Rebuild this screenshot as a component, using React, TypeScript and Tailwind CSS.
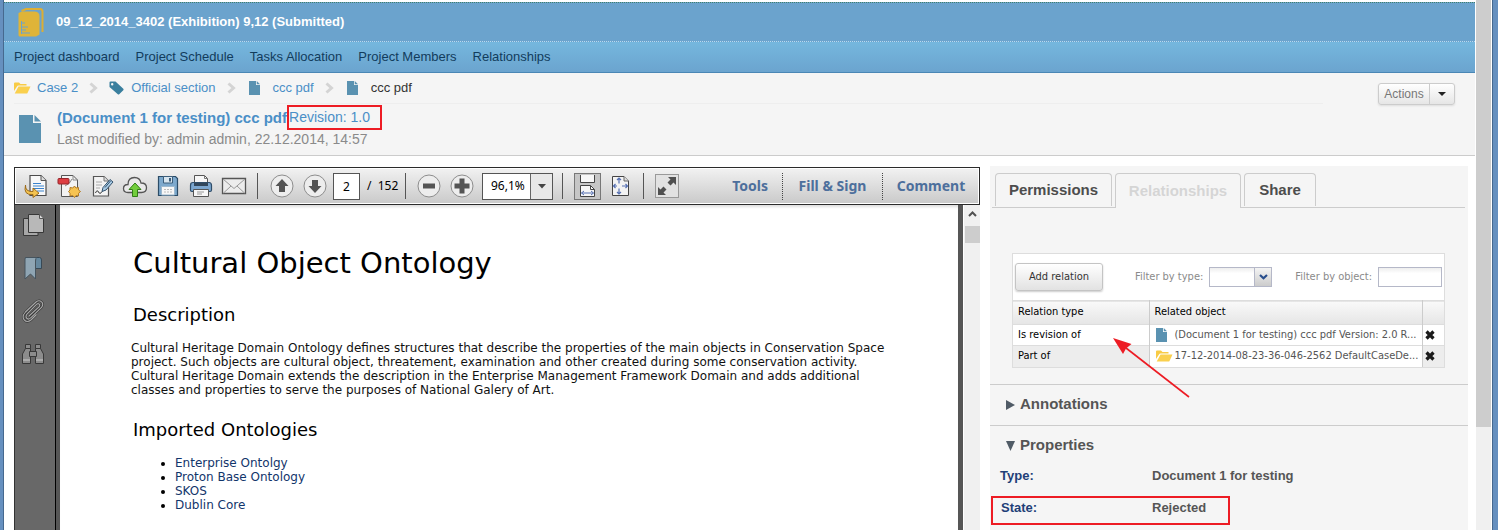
import type { ReactNode } from "react";

function ProjectIcon() {
  return (
    <svg width="26" height="29" viewBox="0 0 26 29" className="shrink-0">
      <path d="M3.500 3 8 1H22Q24.500 1 24.500 3.500V24" fill="none" stroke="#dcae35" strokeWidth="2" />
      <path d="M0.500 5 4 3.500H17Q21.500 4 21.500 8V26.500L18 28.500H2Q0.500 28.500 0.500 27Z" fill="#dfb438" />
      <path d="M3.500 13V26M3.500 15H7M3.500 19H10M3.500 22H8M3.500 25H12" stroke="#6ba3cd" strokeWidth="1" fill="none" />
    </svg>
  );
}

function DocIcon({ large = false }: { large?: boolean }) {
  return (
    <svg width={large ? 22 : 11} height={large ? 28 : 14} viewBox="0 0 22 28" className="shrink-0">
      <path d="M0 0H14V8H22V28H0Z" fill="#5a92b1" />
      <path d="M15.500 0 22 6.500H15.500Z" fill="#5a92b1" />
    </svg>
  );
}

function FolderIcon() {
  return (
    <svg width="17" height="12" viewBox="0 0 17 12" className="shrink-0">
      <path d="M0 9V1.500Q0 .5 1 .5H5L6.500 2H12.500V3.500H4.500Q3.500 3.500 3 4.500Z" fill="#f8cb45" />
      <path d="M4.500 4.500H16.500L13.500 11Q13.200 11.500 12.500 11.500H.7Z" fill="#fad04e" />
    </svg>
  );
}

function TagIcon() {
  return (
    <svg width="15" height="14" viewBox="0 0 15 14" className="shrink-0">
      <path fillRule="evenodd" d="M.5 1.500Q.5.500 1.500.500H6.500L14.300 7.800Q15 8.500 14.300 9.200L10.200 13.200Q9.500 13.800 8.800 13.200L.5 6ZM3.200 2A1.200 1.200 0 1 0 3.200 4.400 1.200 1.200 0 1 0 3.200 2Z" fill="#3a7f9e" />
    </svg>
  );
}

function Chevron() {
  return (
    <svg width="9" height="12" viewBox="0 0 9 12" className="shrink-0">
      <path d="M1.500 1.500 6.500 6 1.500 10.500" fill="none" stroke="#d4d4d4" strokeWidth="3" />
    </svg>
  );
}

function CrossIcon() {
  return (
    <svg width="10" height="10" viewBox="0 0 10 10">
      <path d="M1.500 1.500 8.500 8.500M8.500 1.500 1.500 8.500" stroke="#1b1b1b" strokeWidth="3.200" />
    </svg>
  );
}

const Page = ({ x = 6, y = 1 }: { x?: number; y?: number }) => (
  <>
    <path d={`M${x} ${y}h11l5 5v15h-16z`} fill="#f8f8f8" stroke="#4c4c4c" strokeWidth="1.200" />
    <path d={`M${x + 11} ${y}v5h5`} fill="#ddd" stroke="#555" />
  </>
);

function ConvertIcon() {
  return (
    <svg width="24" height="24" viewBox="0 0 24 24">
      <Page x={6} y={1.500} />
      <path d="M9 9.500H17M9 12H20M9 14.500H20M13 17H20" stroke="#3b83cd" strokeWidth="1.200" />
      <path d="M1.500 11Q1 18 9 17.500V14L15 19.200 9 23.500V20.500Q-1 21.500 1.500 11Z" fill="#f4c451" stroke="#9b6a1a" />
    </svg>
  );
}

function CreatePdfIcon() {
  return (
    <svg width="24" height="24" viewBox="0 0 24 24">
      <path d="M4.500 1.500H16L20.500 6V22.500H4.500Z" fill="#f3f3f3" stroke="#555" />
      <path d="M16 1.500V6H20.500M8 12Q13 10 15 5" fill="none" stroke="#888" />
      <rect x="1" y="4.500" width="11" height="5.500" rx="1" fill="#dd3e43" stroke="#96252a" />
      <path d="M17.500 12 19 14 21.500 13.500 21.500 16 23.500 17.500 21.500 19.300 21.500 22 19 21.500 17.500 23.500 15.800 21.500 13 22 13 19.300 11.500 17.500 13 16 13 13.500 15.800 14Z" fill="#f6c351" stroke="#b17b25" />
    </svg>
  );
}

function EditIcon() {
  return (
    <svg width="24" height="24" viewBox="0 0 24 24">
      <path d="M3.500 2.500H14L18.500 7V22H3.500Z" fill="#f3f3f3" stroke="#555" strokeWidth="1.200" />
      <path d="M14 2.500V7H18.500" fill="#ddd" stroke="#777" />
      <path d="M6 8H12M6 11H12M6 14H10" stroke="#aaa" />
      <path d="M5.500 19Q7 15 8.500 18T12 17.500" stroke="#333" fill="none" />
      <path d="M12 17.500 13 13.500 20 5.500 23 8 16 16Z" fill="#a8cbe6" stroke="#33516b" />
      <path d="M15 13.500 20.500 7" stroke="#33516b" />
    </svg>
  );
}

function CloudIcon() {
  return (
    <svg width="26" height="24" viewBox="0 0 26 24">
      <path d="M6 18.500Q1.500 18.500 1.500 14.500 1.500 10.500 6 10.500 6 3.500 12.500 3.500 18 3.500 19 9 24.500 9 24.500 13.800 24.500 18.500 19.500 18.500Z" fill="#e9e9e9" stroke="#555" strokeWidth="1.300" />
      <path d="M13 9 19 15.500H15.500V22.500H10.500V15.500H7Z" fill="#72cd3c" stroke="#317d16" />
    </svg>
  );
}

function SaveIcon() {
  return (
    <svg width="24" height="24" viewBox="0 0 24 24">
      <path d="M2.500 2.500H19.500L21.500 4.500V21.500H2.500Z" fill="#7da9cd" stroke="#2c4c67" strokeWidth="1.200" />
      <path d="M7.500 2.500H16.500V9H7.500Z" fill="#d7e5ef" stroke="#3c5e7b" />
      <path d="M13 4H15V7.500H13Z" fill="#3c5e7b" />
      <path d="M5.500 12.500H18.500V21H5.500Z" fill="#f7f7f7" stroke="#9db9cf" />
      <path d="M8 15.500H16M8 18H16" stroke="#bbb" strokeDasharray="2 1" />
    </svg>
  );
}

function PrintIcon() {
  return (
    <svg width="24" height="24" viewBox="0 0 24 24">
      <path d="M5.500 11V1.500H15.500L18.500 4.500V11Z" fill="#f7f7f7" stroke="#555" />
      <path d="M15.500 1.500V4.500H18.500" fill="none" stroke="#777" />
      <path d="M1.500 11.500Q1.500 8.500 4 8.500H20Q22.500 8.500 22.500 11.500V16Q22.500 17.500 21 17.500H3Q1.500 17.500 1.500 16Z" fill="#7ba6cf" stroke="#2f4d69" strokeWidth="1.200" />
      <path d="M5 9H19V12H5Z" fill="#31465a" />
      <path d="M4.500 15.500H19.500V22.500H4.500Z" fill="#f7f7f7" stroke="#555" />
      <path d="M8 18H15M8 20H13" stroke="#999" />
    </svg>
  );
}

function MailIcon() {
  return (
    <svg width="26" height="24" viewBox="0 0 26 24">
      <path d="M1.500 4.500H24.500V19.500H1.500Z" fill="#ececec" stroke="#555" strokeWidth="1.300" />
      <path d="M2 5 13 14.500 24 5M2.500 19 10 12M23.500 19 16 12" fill="none" stroke="#999" />
    </svg>
  );
}

function RoundIcon({ d }: { d: string }) {
  return (
    <svg width="24" height="24" viewBox="0 0 24 24">
      <circle cx="12" cy="12" r="11" fill="#ededed" stroke="#8d8d8d" />
      <path d={d} fill="#545454" />
    </svg>
  );
}

function FitWidthIcon() {
  return (
    <svg width="19" height="22" viewBox="0 0 19 22">
      <path d="M2.500 0V7.500H16.500V0" fill="#f7f7f7" stroke="#444" />
      <path d="M2.500 21.500V10.500H12.500L16.500 14.500V21.500Z" fill="#f7f7f7" stroke="#444" />
      <path d="M12.500 10.500V14.500H16.500" fill="none" stroke="#444" />
      <path d="M3.500 18H15.500M6 16 3.500 18 6 20M13 16 15.500 18 13 20" fill="none" stroke="#5670b2" />
    </svg>
  );
}

function FitPageIcon() {
  return (
    <svg width="19" height="22" viewBox="0 0 19 22">
      <path d="M1.500 1.500H13L17.500 6V20.500H1.500Z" fill="#f3f3f3" stroke="#444" />
      <path d="M13 1.500V6H17.500" fill="#ddd" stroke="#666" />
      <path d="M8 3V8.500M8 13.500V19M2.500 11H6M11 11H16.500M6 5 8 3 10 5M6 17 8 19 10 17M4.500 9 2.500 11 4.500 13M14.500 9 16.500 11 14.500 13" fill="none" stroke="#5670b2" strokeWidth="1.200" />
    </svg>
  );
}

function ExpandIcon() {
  return (
    <svg width="20" height="20" viewBox="0 0 20 20">
      <path d="M11 1H19V9L16.500 6.500 13.500 9.500 10.500 6.500 13.500 3.500ZM9 19H1V11L3.500 13.500 6.500 10.500 9.500 13.500 6.500 16.500Z" fill="#505050" />
    </svg>
  );
}

function PagesIcon() {
  return (
    <svg width="24" height="24" viewBox="0 0 24 24">
      <path d="M2.500 5.500H17V22.500H2.500Z" fill="#a7a7a7" stroke="#383838" />
      <path d="M7.500 1.500H18.500L22.500 5.500V19.500H7.500Z" fill="#b8b8b8" stroke="#383838" />
      <path d="M18.500 1.500V5.500H22.500" fill="#ddd" stroke="#555" />
    </svg>
  );
}

function BookmarkIcon() {
  return (
    <svg width="24" height="24" viewBox="0 0 24 24">
      <path d="M4.500 1.500H18.500Q20.500 1.500 20.500 4V12.500H14.500V4L13.500 2Z" fill="#66889e" stroke="#384955" />
      <path d="M4.500 1.500H16Q14.500 2 14.500 5V23L9.500 18 4 23V3Z" fill="#8fa5b3" stroke="#46545e" />
    </svg>
  );
}

function ClipIcon() {
  const d = "M8 17 18 8Q19.500 6 18 5T15 6L6 15Q4 18 6 19.500T10 18.500L20.500 8.500Q23 5 20.500 2.800T15 3L4.500 13Q.5 17.500 3.200 20.800T10 21L15.500 15.500";
  return (
    <svg width="24" height="24" viewBox="0 0 24 24" fill="none">
      <path d={d} stroke="#383838" strokeWidth="2.400" />
      <path d={d} stroke="#aaa" strokeWidth="1.100" />
    </svg>
  );
}

function BinocularsIcon() {
  return (
    <svg width="24" height="24" viewBox="0 0 24 24" fill="#8c8c8c" stroke="#383838">
      <path d="M4.500 2.500H9.500V6.500H4.500ZM14.500 2.500H19.500V6.500H14.500Z" />
      <path d="M4.500 6.500H9.500V21.500H1.500V12ZM19.500 6.500H14.500V21.500H22.500V12Z" />
      <path d="M8.500 9.500H15.500V14.500H8.500Z" />
      <path d="M2 18H9M15 18H22" stroke="#ccc" />
    </svg>
  );
}

const Sep = ({ className }: { className: string }) => (
  <span className={`h-[26px] w-px shrink-0 bg-[#555] ${className}`} />
);

function Tool({ label, children }: { label: string; children: ReactNode }) {
  return (
    <button aria-label={label} className="flex h-[26px] w-[33px] shrink-0 items-center justify-center">
      {children}
    </button>
  );
}

function PdfToolbar() {
  const link = "flex h-[27px] items-center justify-center border-l border-dotted border-[#444]";
  return (
    <div className="flex h-[38px] items-center border border-[#2b2b2b] bg-linear-to-b from-[#f2f2f2] to-[#c9c9c9] pl-1 font-['Noto_Sans',sans-serif] shadow-[inset_0_0_0_1px_#fff]">
      <Tool label="Convert"><ConvertIcon /></Tool>
      <Tool label="Create PDF"><CreatePdfIcon /></Tool>
      <Tool label="Edit"><EditIcon /></Tool>
      <Tool label="Upload"><CloudIcon /></Tool>
      <Tool label="Save"><SaveIcon /></Tool>
      <Tool label="Print"><PrintIcon /></Tool>
      <Tool label="Mail"><MailIcon /></Tool>
      <Sep className="mx-[7px]" />
      <Tool label="Previous page"><RoundIcon d="M12 5 18.500 12H15V18H9V12H5.500Z" /></Tool>
      <Tool label="Next page"><RoundIcon d="M12 19 18.500 12H15V6H9V12H5.500Z" /></Tool>
      <input aria-label="Page" defaultValue="2" className="ml-0.5 h-[27px] w-[27px] shrink-0 border border-[#555] bg-white text-center text-xs text-black" />
      <span className="ml-[7px] w-[38px] shrink-0 text-xs whitespace-pre text-black">/  152</span>
      <Sep className="mr-[6px]" />
      <Tool label="Zoom out"><RoundIcon d="M6 9.500H18V14.500H6Z" /></Tool>
      <Tool label="Zoom in"><RoundIcon d="M9.500 4.500H14.500V9.500H19.500V14.500H14.500V19.500H9.500V14.500H4.500V9.500H9.500Z" /></Tool>
      <div className="ml-1 grid h-[27px] w-[71px] shrink-0 grid-cols-[1fr_22px] border border-[#555] bg-white">
        <select aria-label="Zoom" className="col-span-2 col-start-1 row-start-1 appearance-none pl-2 text-xs text-black">
          <option>96,1%</option>
        </select>
        <span className="pointer-events-none col-start-2 row-start-1 flex items-center justify-center border-l border-[#666] bg-[#e8e8e8]">
          <svg width="8" height="5" viewBox="0 0 8 5"><path d="M0 0H8L4 4.500Z" fill="#444" /></svg>
        </span>
      </div>
      <Sep className="mr-[11px] ml-[9px]" />
      <button aria-label="Fit width" className="flex h-[27px] w-[27px] shrink-0 items-center justify-center border border-[#777] bg-[#c6c6c6]">
        <FitWidthIcon />
      </button>
      <span className="ml-[3px] flex"><Tool label="Fit page"><FitPageIcon /></Tool></span>
      <Sep className="mr-[11px] ml-[6px]" />
      <button aria-label="Full screen" className="flex size-6 shrink-0 items-center justify-center border border-[#999] bg-[#e2e2e2]">
        <ExpandIcon />
      </button>
      <div className="ml-auto flex text-sm font-bold whitespace-nowrap text-[#4d6f9c]">
        <button className="px-[14px]">Tools</button>
        <button className={`${link} w-[100px]`}>Fill &amp; Sign</button>
        <button className={`${link} w-[97px]`}>Comment</button>
      </div>
    </div>
  );
}

function PdfViewer() {
  return (
    <section className="mt-px flex min-w-0 flex-1 flex-col">
      <PdfToolbar />
      <div className="flex flex-1">
        <nav className="flex w-[42px] shrink-0 flex-col items-center gap-[19px] border-r border-l border-r-black border-l-[#333] bg-[#686868] pt-2 pr-1">
          <button aria-label="Pages"><PagesIcon /></button>
          <button aria-label="Bookmarks"><BookmarkIcon /></button>
          <button aria-label="Attachments"><ClipIcon /></button>
          <button aria-label="Search"><BinocularsIcon /></button>
        </nav>
        <article className="min-w-0 flex-1 border-r-[5px] border-l-4 border-[#565656] bg-white pl-[71px] font-['DejaVu_Sans',sans-serif] text-xs/[14px] text-[#111] shadow-[inset_0_4px_3px_-2px_#ddd]">
          <h1 className="pt-10 pl-0.5 text-[29px]/[36px] text-black">Cultural Object Ontology</h1>
          <h2 className="mt-[22px] pl-0.5 text-lg/6 text-black">Description</h2>
          <p className="mt-[14px] max-w-[760px]">
            Cultural Heritage Domain Ontology defines structures that describe the properties of the main objects in Conservation Space project. Such objects are cultural object, threatement, examination and other created during some conservation activity. Cultural Heritage Domain extends the description in the Enterprise Management Framework Domain and adds additional classes and properties to serve the purposes of National Galery of Art.
          </p>
          <h2 className="mt-[21px] pl-0.5 text-lg/6 text-black">Imported Ontologies</h2>
          <ul className="mt-[14px] list-disc pl-11 marker:text-black">
            <li><a href="#enterprise" className="text-[#12356b]">Enterprise Ontolgy</a></li>
            <li><a href="#proton" className="text-[#12356b]">Proton Base Ontology</a></li>
            <li><a href="#skos" className="text-[#12356b]">SKOS</a></li>
            <li><a href="#dublin" className="text-[#12356b]">Dublin Core</a></li>
          </ul>
        </article>
        <div className="flex w-[17px] shrink-0 flex-col items-center border-l border-white bg-[#f0f0f0] pt-[5px]">
          <svg width="9" height="8" viewBox="0 0 9 8"><path d="M1 6 4.500 2.500 8 6" fill="none" stroke="#505050" strokeWidth="2" /></svg>
          <span className="mt-2 h-[17px] w-[15px] bg-[#cdcdcd]" />
        </div>
      </div>
    </section>
  );
}

function RelationRow({ type, icon, text, shaded = false }: { type: string; icon: ReactNode; text: string; shaded?: boolean }) {
  return (
    <tr className="h-[21px] border-t border-[#ddd]">
      <td className={shaded ? "bg-[#ededed] px-[5px] text-black" : "px-[5px] text-black"}>{type}</td>
      <td className="border-l border-[#ccc] pl-[5px]">
        <span className="flex items-center whitespace-nowrap">
          <span className="flex w-5 shrink-0 pl-px">{icon}</span>
          {text}
        </span>
      </td>
      <td className={shaded ? "border-l border-[#ccc] bg-[#ededed]" : "border-l border-[#ccc]"}>
        <button aria-label="Remove" className="flex pl-0.5"><CrossIcon /></button>
      </td>
    </tr>
  );
}

function Relations() {
  return (
    <div className="relative mr-[23px] ml-[22px] mt-[45px] border border-[#ddd] bg-white font-['DejaVu_Sans_Condensed','DejaVu_Sans',sans-serif] text-[11px] text-[#555]">
      <div className="flex h-[46px] items-center px-0.5 text-[#8a8a8a]">
        <button className="mr-auto h-7 w-[88px] rounded-[3px] border border-[#c4c4c4] bg-linear-to-b from-white to-[#e2e2e2] text-[#333] shadow-[0_1px_2px_#ccc]">Add relation</button>
        <label htmlFor="ftype">Filter by type:</label>
        <div className="mr-[23px] ml-[6px] grid h-5 w-[63px] grid-cols-[1fr_17px] border border-[#b5b8c8] bg-linear-to-b from-[#eee] to-white to-30%">
          <select id="ftype" className="col-span-2 col-start-1 row-start-1 appearance-none"><option></option></select>
          <span className="pointer-events-none col-start-2 row-start-1 flex items-center justify-center border-l border-[#b5b8c8] bg-linear-to-b from-[#f4f4f4] to-[#ccc]">
            <svg width="9" height="6" viewBox="0 0 9 6"><path d="M1 1 4.500 4.200 8 1" fill="none" stroke="#274d8c" strokeWidth="2.200" /></svg>
          </span>
        </div>
        <label htmlFor="fobject">Filter by object:</label>
        <input id="fobject" className="ml-[6px] h-5 w-16 border border-[#b5b8c8] bg-linear-to-b from-[#eee] to-white to-30%" />
      </div>
      <table className="w-full table-fixed border-collapse text-left">
        <colgroup>
          <col className="w-[136px]" />
          <col />
          <col className="w-[22px]" />
        </colgroup>
        <thead>
          <tr className="h-6 border-t border-[#ddd] bg-linear-to-b from-[#f9f9f9] to-[#e5e5e5] text-black">
            <th className="px-[5px] font-normal">Relation type</th>
            <th className="border-l border-[#ccc] px-[5px] font-normal">Related object</th>
            <th className="border-l border-[#ccc]"></th>
          </tr>
        </thead>
        <tbody>
          <RelationRow type="Is revision of" icon={<DocIcon />} text="(Document 1 for testing) ccc pdf Version: 2.0 R..." />
          <RelationRow type="Part of" icon={<FolderIcon />} text="17-12-2014-08-23-36-046-2562 DefaultCaseDe..." shaded />
        </tbody>
      </table>
      <svg width="80" height="62" viewBox="0 0 80 62" className="pointer-events-none absolute top-[83px] left-[99px]">
        <path d="M77 60 14 11" stroke="#ed1c24" strokeWidth="1.600" />
        <path d="M1 1 19.500 7 14 11.500 11 17Z" fill="#ed1c24" />
      </svg>
    </div>
  );
}

function SidePanel() {
  const tab = "rounded-t-[4px] border border-b-0 border-[#ccc]";
  return (
    <aside className="w-[478px] shrink-0 bg-[#f5f5f5] font-bold text-[#555]">
      <div className="mr-[3px] ml-[2px] flex h-[42px] items-end border-b border-[#ccc] pl-[3px] text-[15px] text-[#4d4d4d]">
        <button className={`${tab} mb-px h-[33px] w-[117px]`}>Permissions</button>
        <button className={`${tab} z-10 -mb-px ml-[3px] h-[35px] w-[126px] bg-[#f5f5f5] text-[#d5d5d5]`}>Relationships</button>
        <button className={`${tab} mb-px ml-[3px] h-[33px] w-[72px]`}>Share</button>
      </div>
      <div className="font-normal"><Relations /></div>
      <h3 className="mt-4 flex h-[41px] items-center border-t border-[#ccc] pl-4 text-[15px]">
        <svg width="9" height="10" viewBox="0 0 9 10" className="mr-[5px]"><path d="M0 0 9 5 0 10Z" fill="#505b66" /></svg>
        Annotations
      </h3>
      <h3 className="flex h-[41px] items-center border-t border-[#ccc] pl-4 text-[15px]">
        <svg width="9" height="10" viewBox="0 0 9 10" className="mr-[5px]"><path d="M0 0H9L4.500 10Z" fill="#505b66" /></svg>
        Properties
      </h3>
      <dl className="text-[13px]/5">
        <div className="flex pl-[10px]">
          <dt className="w-[152px] text-[#1f3f78]">Type:</dt>
          <dd>Document 1 for testing</dd>
        </div>
        <div className="mt-[10px] ml-px flex h-[29px] w-[239px] border-2 border-[#ed1c24] pl-2">
          <dt className="w-[151px] text-[#1f3f78]">State:</dt>
          <dd>Rejected</dd>
        </div>
      </dl>
    </aside>
  );
}

const NAV = ["Project dashboard", "Project Schedule", "Tasks Allocation", "Project Members", "Relationships"];

export default function App() {
  return (
    <div className="flex min-h-screen bg-white font-['Liberation_Sans',Arial,sans-serif]">
      <div className="w-1 shrink-0 border-r border-[#46698f] bg-[#6690bf]" />
      <main className="flex min-w-0 flex-1 flex-col">
        <header className="mt-0.5 border-t border-dotted border-[#3f7f6b] bg-[#6ba3cd]">
          <div className="flex h-[38px] items-center gap-3 pl-[14px]">
            <ProjectIcon />
            <h1 className="text-[13px] font-bold text-white">09_12_2014_3402 (Exhibition) 9,12 (Submitted)</h1>
          </div>
          <nav className="flex h-8 items-center gap-4 border-t border-b border-t-[#b9d9ee] border-b-[#4a87b5] bg-linear-to-b from-[#75b7de] to-[#6ba4cf] pl-[10px] text-[13px] text-[#123c5c] [border-top-style:dotted]">
            {NAV.map((n) => (
              <a key={n} href="#nav">{n}</a>
            ))}
          </nav>
        </header>
        <div className="flex h-[83px] border-b border-[#ccc] bg-[#f5f5f5] pr-5 pl-[10px]">
          <div className="min-w-0 flex-1">
            <nav className="mr-[55px] flex h-[31px] items-center border-b border-[#eee] text-[13px] text-[#4a8fc7]">
              <FolderIcon />
              <a href="#case" className="mr-[11px] ml-[6px]">Case 2</a>
              <Chevron />
              <span className="ml-[11px] flex"><TagIcon /></span>
              <a href="#section" className="mr-[11px] ml-[7px]">Official section</a>
              <Chevron />
              <span className="ml-[13px] flex"><DocIcon /></span>
              <a href="#doc" className="mr-[11px] ml-[13px]">ccc pdf</a>
              <Chevron />
              <span className="ml-[13px] flex"><DocIcon /></span>
              <span className="ml-[13px] text-[#333]">ccc pdf</span>
            </nav>
            <div className="flex items-start pl-[5px]">
              <span className="mt-[11px]"><DocIcon large /></span>
              <div className="ml-4 pt-px text-sm whitespace-nowrap text-[#8a8a8a]">
                <h2 className="flex items-center text-[15px] font-bold text-[#4a8fc7]">
                  (Document 1 for testing) ccc pdf
                  <span className="h-[25px] w-[95px] border-2 border-[#ed1c24] text-sm/[21px] font-normal">Revision: 1.0</span>
                </h2>
                <p className="leading-[18px]">Last modified by: admin admin, 22.12.2014, 14:57</p>
              </div>
            </div>
          </div>
          <div className="mt-[10px] flex h-[22px] rounded-[3px] border border-[#ccc] bg-linear-to-b from-white to-[#e6e6e6] shadow-[0_1px_2px_#ddd]">
            <button className="w-[50px] text-xs text-[#777]">Actions</button>
            <button aria-label="More actions" className="flex w-[25px] items-center justify-center border-l border-[#ccc]">
              <svg width="8" height="4" viewBox="0 0 8 4"><path d="M0 0H8L4 4Z" fill="#222" /></svg>
            </button>
          </div>
        </div>
        <div className="flex flex-1 gap-[10px] pt-[10px] pr-[7px] pl-[10px]">
          <PdfViewer />
          <SidePanel />
        </div>
      </main>
      <div className="ml-px flex w-[15px] shrink-0 flex-col bg-[#f0f0f0]">
        <span className="h-[427px] bg-[#cdcdcd]" />
      </div>
      <div className="ml-px w-[6px] shrink-0 border-l border-[#46698f] bg-[#6690bf]" />
    </div>
  );
}
